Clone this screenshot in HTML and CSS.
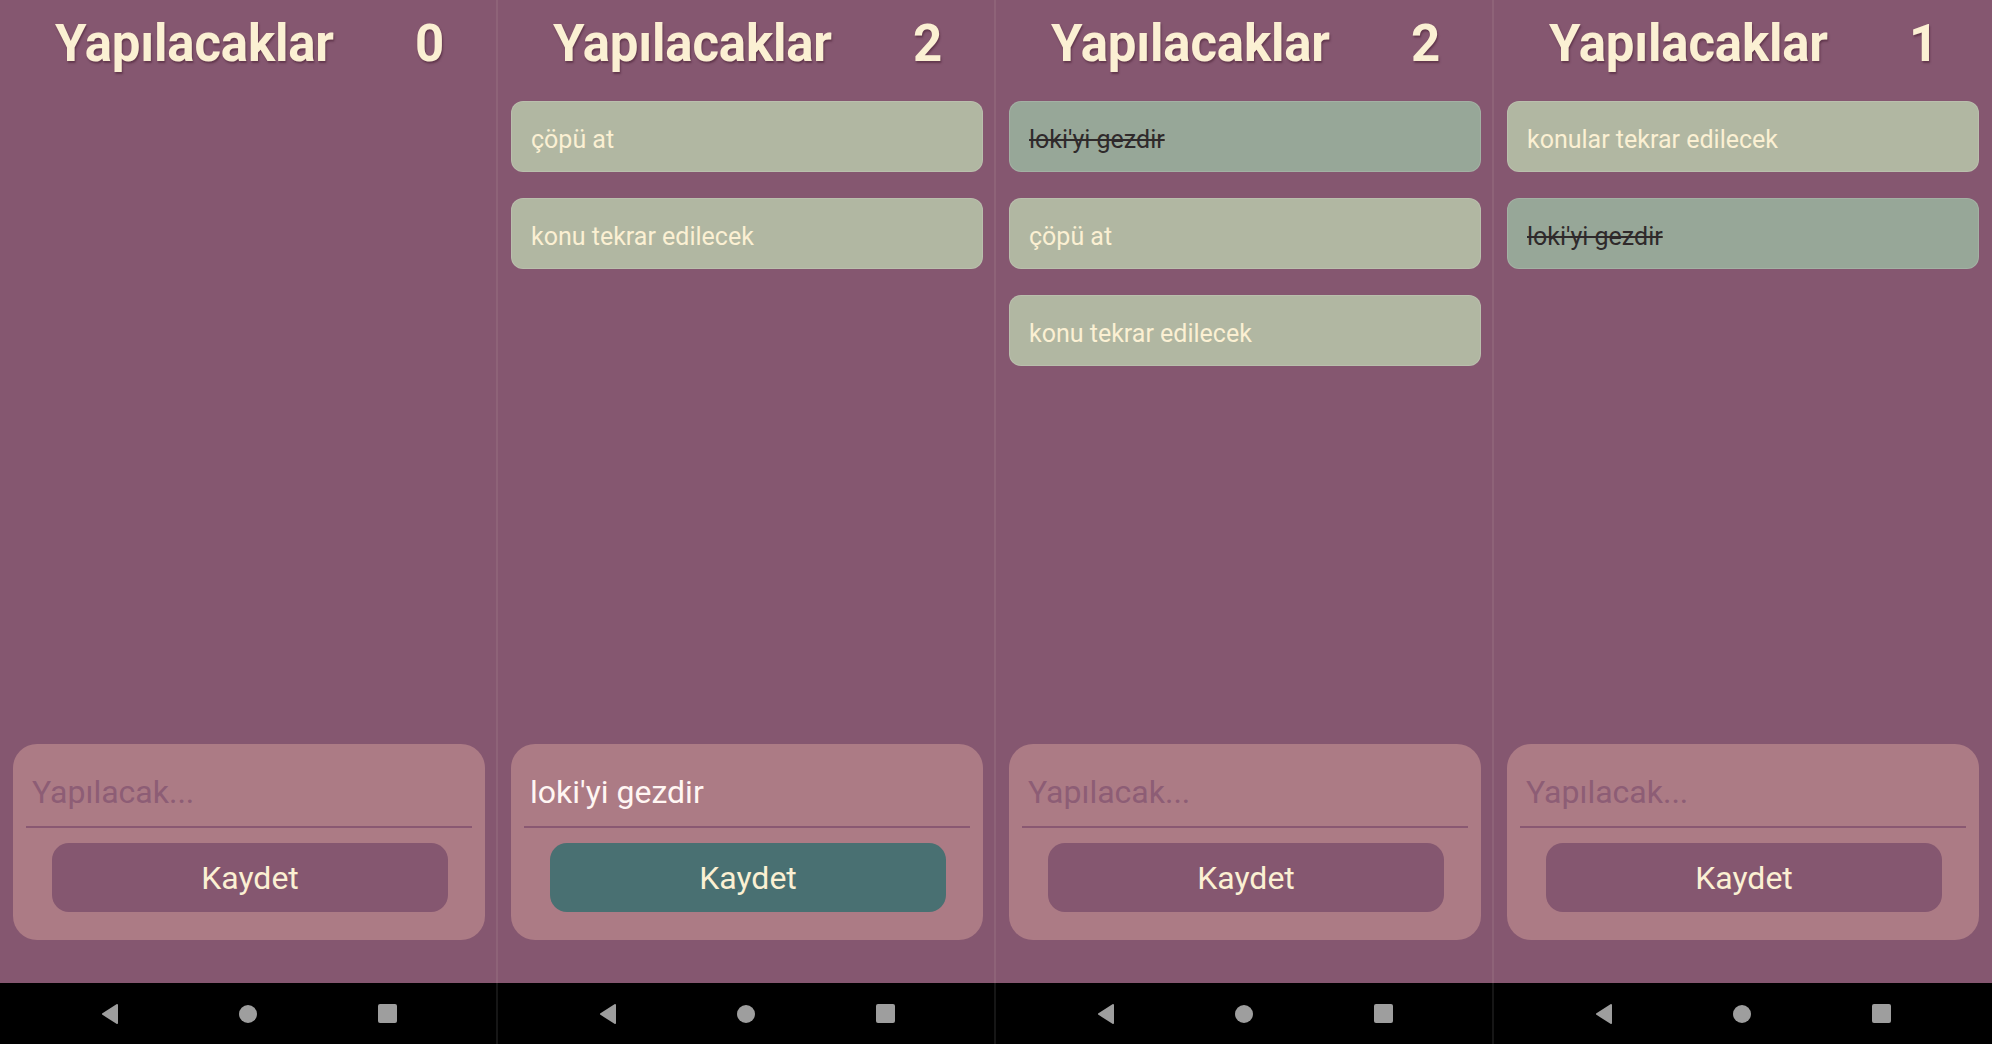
FILE: index.html
```html
<!DOCTYPE html>
<html lang="tr">
<head>
<meta charset="utf-8">
<title>Yapılacaklar</title>
<link rel="stylesheet" href="styles.css">
</head>
<body>
<div class="screens">

  <section class="phone">
    <div class="app">
      <header class="head"><span class="title">Yapılacaklar</span><span class="count">0</span></header>
      <ul class="list"></ul>
      <div class="composer">
        <div class="field placeholder">Yapılacak...</div>
        <button class="save">Kaydet</button>
      </div>
    </div>
    <nav class="navbar">
      <svg class="nav-back" viewBox="0 0 18 22" width="18" height="22"><path d="M16 2 L2 11 L16 20 Z" fill="#9e9e9e" stroke="#9e9e9e" stroke-width="2" stroke-linejoin="round"/></svg>
      <span class="nav-home"></span>
      <span class="nav-recent"></span>
    </nav>
  </section>

  <section class="phone">
    <div class="app">
      <header class="head"><span class="title">Yapılacaklar</span><span class="count">2</span></header>
      <ul class="list">
        <li class="item">çöpü at</li>
        <li class="item">konu tekrar edilecek</li>
      </ul>
      <div class="composer">
        <div class="field filled">loki'yi gezdir</div>
        <button class="save active">Kaydet</button>
      </div>
    </div>
    <nav class="navbar">
      <svg class="nav-back" viewBox="0 0 18 22" width="18" height="22"><path d="M16 2 L2 11 L16 20 Z" fill="#9e9e9e" stroke="#9e9e9e" stroke-width="2" stroke-linejoin="round"/></svg>
      <span class="nav-home"></span>
      <span class="nav-recent"></span>
    </nav>
  </section>

  <section class="phone">
    <div class="app">
      <header class="head"><span class="title">Yapılacaklar</span><span class="count">2</span></header>
      <ul class="list">
        <li class="item done">loki'yi gezdir</li>
        <li class="item">çöpü at</li>
        <li class="item">konu tekrar edilecek</li>
      </ul>
      <div class="composer">
        <div class="field placeholder">Yapılacak...</div>
        <button class="save">Kaydet</button>
      </div>
    </div>
    <nav class="navbar">
      <svg class="nav-back" viewBox="0 0 18 22" width="18" height="22"><path d="M16 2 L2 11 L16 20 Z" fill="#9e9e9e" stroke="#9e9e9e" stroke-width="2" stroke-linejoin="round"/></svg>
      <span class="nav-home"></span>
      <span class="nav-recent"></span>
    </nav>
  </section>

  <section class="phone">
    <div class="app">
      <header class="head"><span class="title">Yapılacaklar</span><span class="count">1</span></header>
      <ul class="list">
        <li class="item">konular tekrar edilecek</li>
        <li class="item done">loki'yi gezdir</li>
      </ul>
      <div class="composer">
        <div class="field placeholder">Yapılacak...</div>
        <button class="save">Kaydet</button>
      </div>
    </div>
    <nav class="navbar">
      <svg class="nav-back" viewBox="0 0 18 22" width="18" height="22"><path d="M16 2 L2 11 L16 20 Z" fill="#9e9e9e" stroke="#9e9e9e" stroke-width="2" stroke-linejoin="round"/></svg>
      <span class="nav-home"></span>
      <span class="nav-recent"></span>
    </nav>
  </section>

</div>
</body>
</html>
```

FILE: styles.css
```css
* { box-sizing: border-box; }

html, body {
  margin: 0;
  padding: 0;
  width: 1992px;
  height: 1044px;
  overflow: hidden;
  background: #000;
  font-family: Roboto, "Noto Sans", "Liberation Sans", sans-serif;
}

.screens {
  display: grid;
  grid-template-columns: repeat(4, 498px);
  height: 1044px;
}

.phone {
  display: flex;
  flex-direction: column;
  height: 1044px;
}

.app {
  flex: 1;
  display: flex;
  flex-direction: column;
  padding: 0 11px 43px 13px;
  background: #855770;
  border-right: 2px solid #8e6378;
}

.navbar {
  height: 61px;
  background: #000;
  border-right: 2px solid #161616;
  display: grid;
  grid-template-columns: repeat(3, 139px);
  justify-content: center;
  align-items: center;
  justify-items: center;
}

.phone:last-child .app,
.phone:last-child .navbar { border-right-color: transparent; }

.head {
  display: flex;
  justify-content: space-between;
  align-items: baseline;
  padding: 18px 41px 0 42px;
  font-size: 51px;
  line-height: 52px;
  letter-spacing: -0.2px;
  font-weight: 700;
  color: #fbf0d3;
  text-shadow: 1px 2px 2px rgba(70, 30, 50, 0.55);
}

.list {
  list-style: none;
  margin: 31px 0 0;
  padding: 0;
  flex: 1;
  display: flex;
  flex-direction: column;
  gap: 26px;
}

.item {
  height: 71px;
  display: flex;
  align-items: center;
  padding: 6px 19px 0;
  border-radius: 12px;
  background: #b1b7a2;
  border: 1px solid rgba(255, 255, 255, 0.12);
  color: #fbf0d3;
  font-size: 25px;
}

.item.done {
  background: #97a798;
  color: #2f2a2b;
  text-decoration: line-through;
  text-decoration-thickness: 2px;
}

.composer {
  background: #ac7b85;
  border-radius: 24px;
  padding: 0 13px 28px;
  display: flex;
  flex-direction: column;
}

.field {
  padding: 30px 6px 15px;
  font-size: 32px;
  line-height: 37.5px;
  border-bottom: 2px solid #8a5872;
}

.field.placeholder { color: #8d5d75; }
.field.filled { color: #fff6f3; }

.save {
  margin: 15px 24px 0 26px;
  height: 69px;
  border: 0;
  border-radius: 17px;
  background: #855770;
  color: #fbf0d3;
  font-family: inherit;
  font-size: 32px;
  padding: 0;
}

.save.active { background: #497072; }

.nav-back { display: block; transform: translateX(1px); }

.nav-home {
  width: 18px;
  height: 18px;
  border-radius: 50%;
  background: #9e9e9e;
}

.nav-recent {
  width: 19px;
  height: 19px;
  border-radius: 2px;
  background: #9e9e9e;
}
```
